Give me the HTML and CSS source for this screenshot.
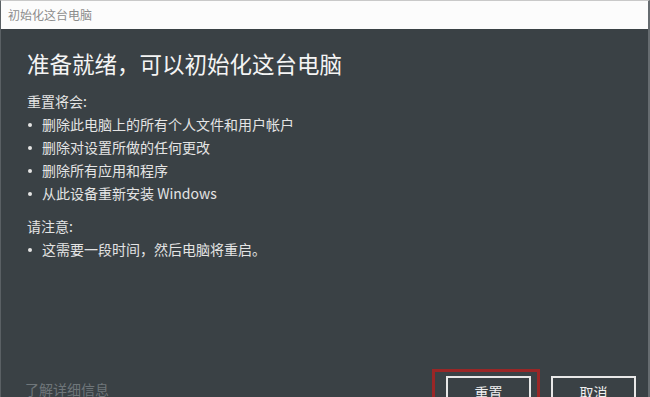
FILE: index.html
```html
<!DOCTYPE html>
<html>
<head>
  <meta charset="UTF-8">
  <meta name="viewport" content="width=device-width, initial-scale=1.0">
  <title>初始化这台电脑</title>
  <link rel="stylesheet" href="styles.css">
</head>
<body>
  <div class="window">
    <div class="titlebar">初始化这台电脑</div>
    <div class="content">
      <h1 class="heading">准备就绪，可以初始化这台电脑</h1>
      <p class="label">重置将会:</p>
      <ul class="items">
        <li>删除此电脑上的所有个人文件和用户帐户</li>
        <li>删除对设置所做的任何更改</li>
        <li>删除所有应用和程序</li>
        <li>从此设备重新安装 Windows</li>
      </ul>
      <p class="label note">请注意:</p>
      <ul class="items">
        <li>这需要一段时间，然后电脑将重启。</li>
      </ul>
      <div class="footer">
        <a class="more" href="#">了解详细信息</a>
        <div class="actions">
          <span class="highlight"><button class="btn">重置</button></span>
          <button class="btn">取消</button>
        </div>
      </div>
    </div>
  </div>
</body>
</html>
```

FILE: styles.css
```css
* {
  margin: 0;
  padding: 0;
  box-sizing: border-box;
  font-family: "Noto Sans CJK SC", "Noto Sans", sans-serif;
}
html, body {
  height: 100%;
  overflow: hidden;
}
body {
  background-color: #3a4145;
}
div.window {
  height: 100%;
  border-top: 1px solid #c9c9c9;
  border-left: 1px solid #5a6064;
  border-right: 2px solid #666c70;
  background-color: #3a4145;
}
div.titlebar {
  height: 28px;
  padding-left: 7px;
  background-color: #fcfcfc;
  color: #8c8c8c;
  font-size: 12px;
  line-height: 28px;
}
div.content {
  padding: 0 0 0 26px;
  color: #e4e4e4;
}
h1.heading {
  margin-top: 18px;
  color: #f4f4f4;
  font-size: 22.5px;
  font-weight: 400;
  line-height: 32px;
}
p.label {
  margin-top: 11px;
  font-size: 14px;
  line-height: 23px;
}
p.note {
  margin-top: 10px;
}
ul.items {
  list-style: none;
}
ul.items li {
  position: relative;
  padding-left: 15px;
  font-size: 14px;
  line-height: 23px;
}
ul.items li::before {
  content: "";
  position: absolute;
  left: 1px;
  top: 10px;
  width: 4px;
  height: 4px;
  border-radius: 50%;
  background-color: #e4e4e4;
}
div.footer {
  display: flex;
  justify-content: space-between;
  align-items: flex-start;
  margin-top: 108px;
  padding-right: 12px;
}
a.more {
  margin-top: 10px;
  margin-left: -2px;
  color: #6f767a;
  font-size: 14px;
  line-height: 20px;
  text-decoration: none;
}
div.actions {
  display: flex;
  align-items: flex-start;
  gap: 11px;
}
span.highlight {
  display: block;
  padding: 4px 6px 0 11px;
  border: 3px solid #9a2626;
  border-bottom: none;
}
button.btn {
  display: block;
  width: 85px;
  height: 32px;
  margin-top: 7px;
  border: 2px solid #e8e8e8;
  background-color: #3a4145;
  color: #f0f0f0;
  font-size: 14px;
  line-height: 28px;
}
span.highlight button.btn {
  margin-top: 0;
}
```
